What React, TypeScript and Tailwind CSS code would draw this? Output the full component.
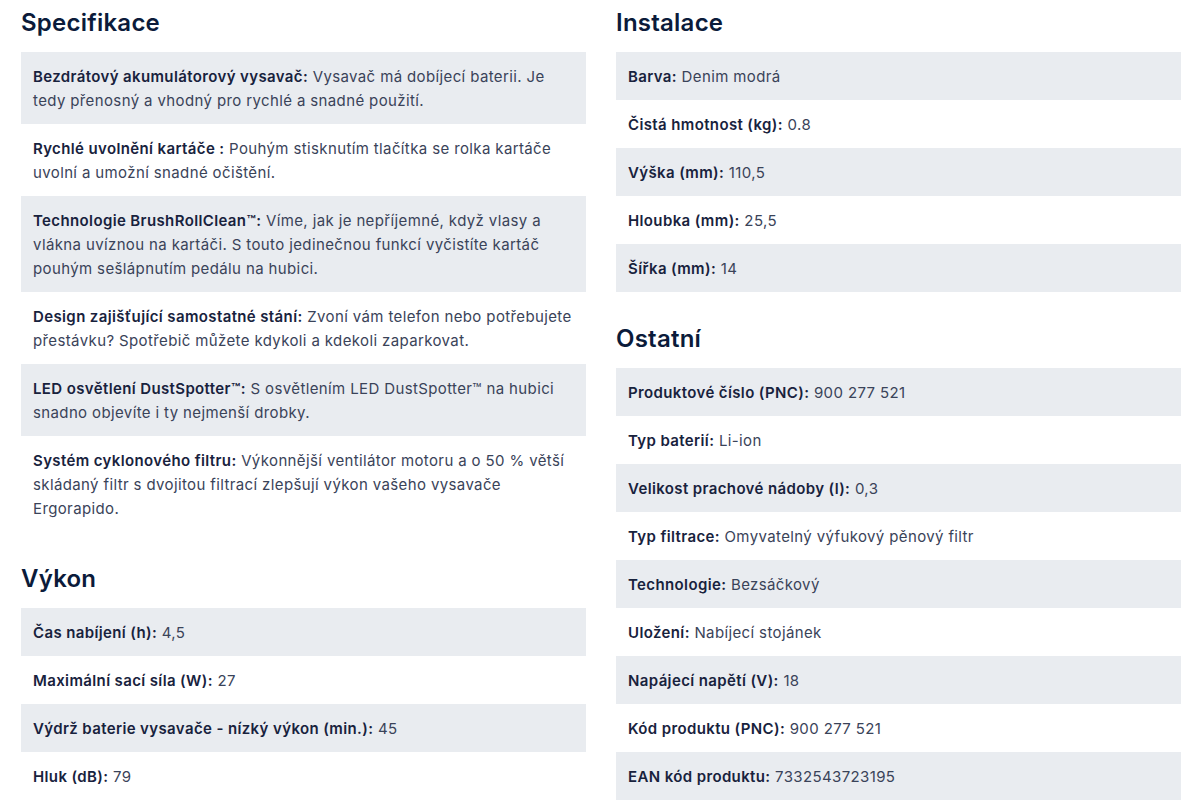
import React from "react";

type Spec = { label: string; value: string };

const specifikace: Spec[] = [
  {
    label: "Bezdrátový akumulátorový vysavač:",
    value: "Vysavač má dobíjecí baterii. Je tedy přenosný a vhodný pro rychlé a snadné použití.",
  },
  {
    label: "Rychlé uvolnění kartáče :",
    value: "Pouhým stisknutím tlačítka se rolka kartáče uvolní a umožní snadné očištění.",
  },
  {
    label: "Technologie BrushRollClean™:",
    value:
      "Víme, jak je nepříjemné, když vlasy a vlákna uvíznou na kartáči. S touto jedinečnou funkcí vyčistíte kartáč pouhým sešlápnutím pedálu na hubici.",
  },
  {
    label: "Design zajišťující samostatné stání:",
    value: "Zvoní vám telefon nebo potřebujete přestávku? Spotřebič můžete kdykoli a kdekoli zaparkovat.",
  },
  {
    label: "LED osvětlení DustSpotter™:",
    value: "S osvětlením LED DustSpotter™ na hubici snadno objevíte i ty nejmenší drobky.",
  },
  {
    label: "Systém cyklonového filtru:",
    value:
      "Výkonnější ventilátor motoru a o 50 % větší skládaný filtr s dvojitou filtrací zlepšují výkon vašeho vysavače Ergorapido.",
  },
];

const vykon: Spec[] = [
  { label: "Čas nabíjení (h):", value: "4,5" },
  { label: "Maximální sací síla (W):", value: "27" },
  { label: "Výdrž baterie vysavače - nízký výkon (min.):", value: "45" },
  { label: "Hluk (dB):", value: "79" },
];

const instalace: Spec[] = [
  { label: "Barva:", value: "Denim modrá" },
  { label: "Čistá hmotnost (kg):", value: "0.8" },
  { label: "Výška (mm):", value: "110,5" },
  { label: "Hloubka (mm):", value: "25,5" },
  { label: "Šířka (mm):", value: "14" },
];

const ostatni: Spec[] = [
  { label: "Produktové číslo (PNC):", value: "900 277 521" },
  { label: "Typ baterií:", value: "Li-ion" },
  { label: "Velikost prachové nádoby (l):", value: "0,3" },
  { label: "Typ filtrace:", value: "Omyvatelný výfukový pěnový filtr" },
  { label: "Technologie:", value: "Bezsáčkový" },
  { label: "Uložení:", value: "Nabíjecí stojánek" },
  { label: "Napájecí napětí (V):", value: "18" },
  { label: "Kód produktu (PNC):", value: "900 277 521" },
  { label: "EAN kód produktu:", value: "7332543723195" },
];

const Section = ({ title, rows, first }: { title: string; rows: Spec[]; first?: boolean }) => {
  return (
    <section className={first ? "" : "mt-[24px]"}>
      <h2 className="text-[24px] leading-[32px] pt-[7px] pb-[13px] font-semibold tracking-[0.01em] text-[#0b1b3a]">
        {title}
      </h2>
      <div className="flex flex-col">
        {rows.map((row, i) => (
          <div
            key={row.label}
            className={`px-3 pt-[13px] pb-[11px] text-[15px] leading-[24px] tracking-[0.025em] ${i % 2 === 0 ? "bg-[#e9ecf0]" : "bg-white"}`}
          >
            <span className="font-semibold text-[#18223d]">{row.label}</span>{" "}
            <span className="text-[#3a4359]">{row.value}</span>
          </div>
        ))}
      </div>
    </section>
  );
};

export default function App() {
  return (
    <div className="w-[1195px] h-[808px] overflow-hidden bg-white font-['Inter',sans-serif]">
      <div className="grid grid-cols-[565px_565px] gap-x-[30px] pl-[21px]">
        {/* left column */}
        <div className="flex flex-col">
          <Section title="Specifikace" rows={specifikace} first />
          <Section title="Výkon" rows={vykon} />
        </div>
        {/* right column */}
        <div className="flex flex-col">
          <Section title="Instalace" rows={instalace} first />
          <Section title="Ostatní" rows={ostatni} />
        </div>
      </div>
    </div>
  );
}
